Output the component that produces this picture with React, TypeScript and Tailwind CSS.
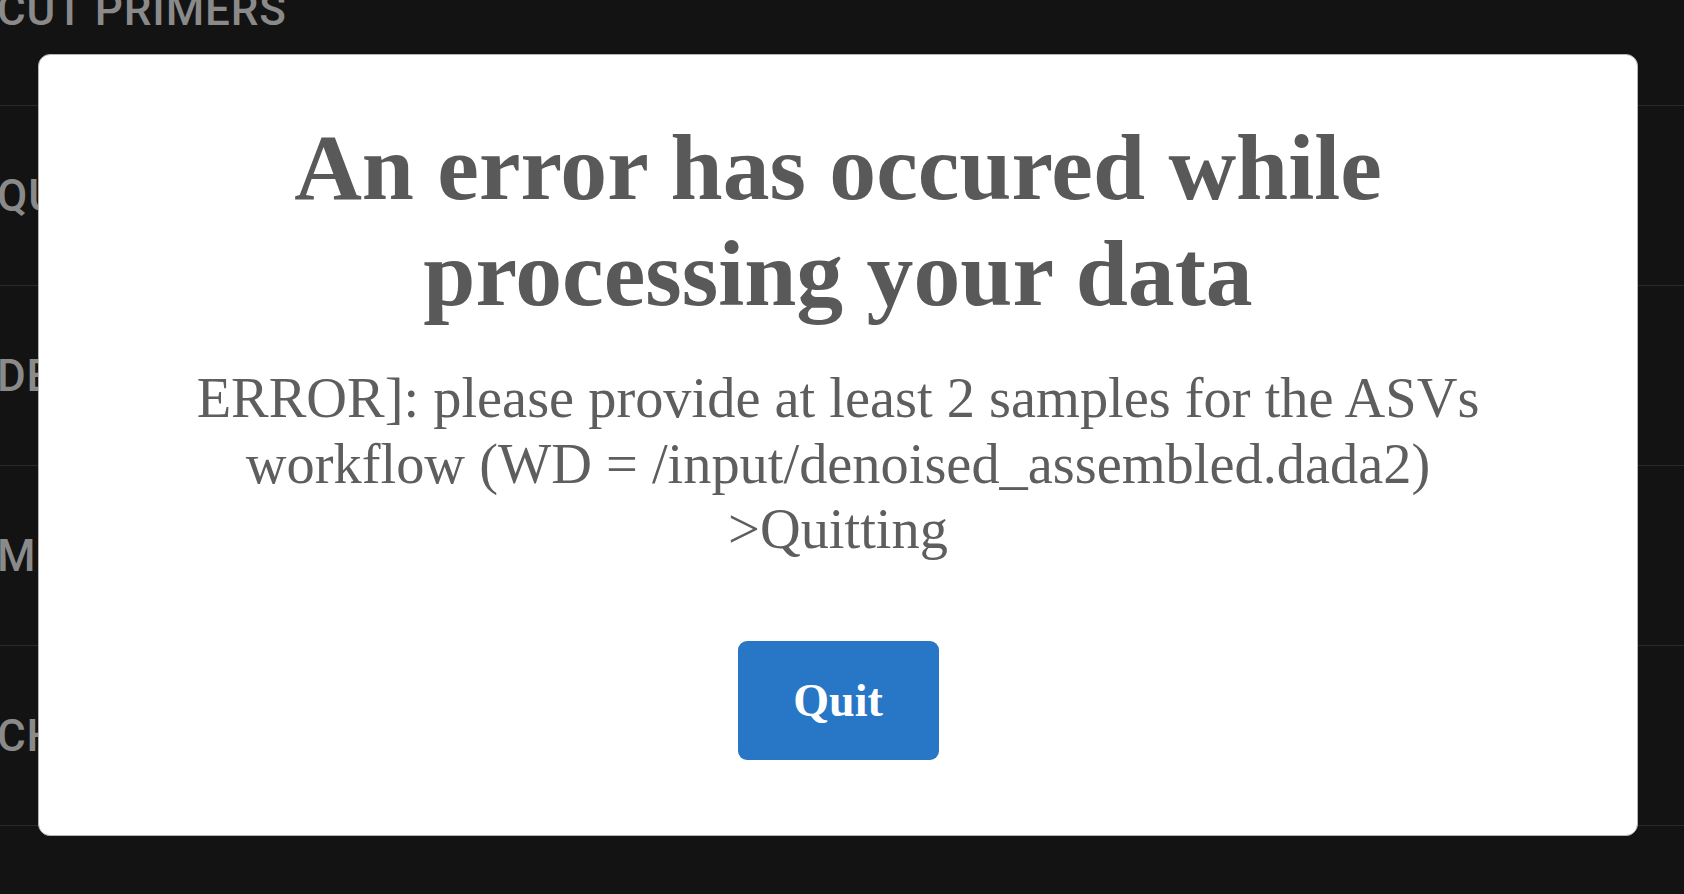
const steps = ["CUT PRIMERS", "QUALITY FILTERING", "DENOISE", "MERGE PAIRS", "CHIMERA FILTERING"];

function StepRow({ label, first }: { label: string; first?: boolean }) {
  return (
    <div
      className={`flex items-center border-b border-[#2a2a2a] ${first ? "h-[191px]" : "h-[180px]"}`}
    >
      <span
        className="-ml-[3px] text-[44px] font-medium uppercase leading-none tracking-[0.02em] text-[#8a8a8a]"
        style={{ fontFamily: "Roboto, 'Liberation Sans', sans-serif" }}
      >
        {label}
      </span>
    </div>
  );
}

export default function App() {
  return (
    <div className="relative h-[894px] w-full overflow-hidden bg-[#131313]">
      {/* workflow steps behind the dialog */}
      <div className="-mt-[85px] flex flex-col">
        {steps.map((s, i) => (
          <StepRow key={s} label={s} first={i === 0} />
        ))}
      </div>

      {/* error dialog */}
      <div className="absolute left-[38px] top-[54px] flex h-[782px] w-[1600px] flex-col items-center rounded-[12px] border border-[#b4b4b4] bg-white px-[80px] pt-[60px] text-center font-['Liberation_Serif',serif]">
        <h1 className="text-[93.7px] font-bold leading-[106px] text-[#595959]">
          An error has occured while processing your data
        </h1>
        <p className="mt-[39px] text-[56.4px] leading-[65.5px] text-[#5e5e5e]">
          ERROR]: please provide at least 2 samples for the ASVs workflow (WD = /input/denoised_assembled.dada2)
          <br />
          &gt;Quitting
        </p>
        <button className="mt-[78px] flex h-[119px] w-[201px] items-center justify-center rounded-[9px] bg-[#2877c6] text-[46px] font-bold text-white">
          Quit
        </button>
      </div>
    </div>
  );
}
